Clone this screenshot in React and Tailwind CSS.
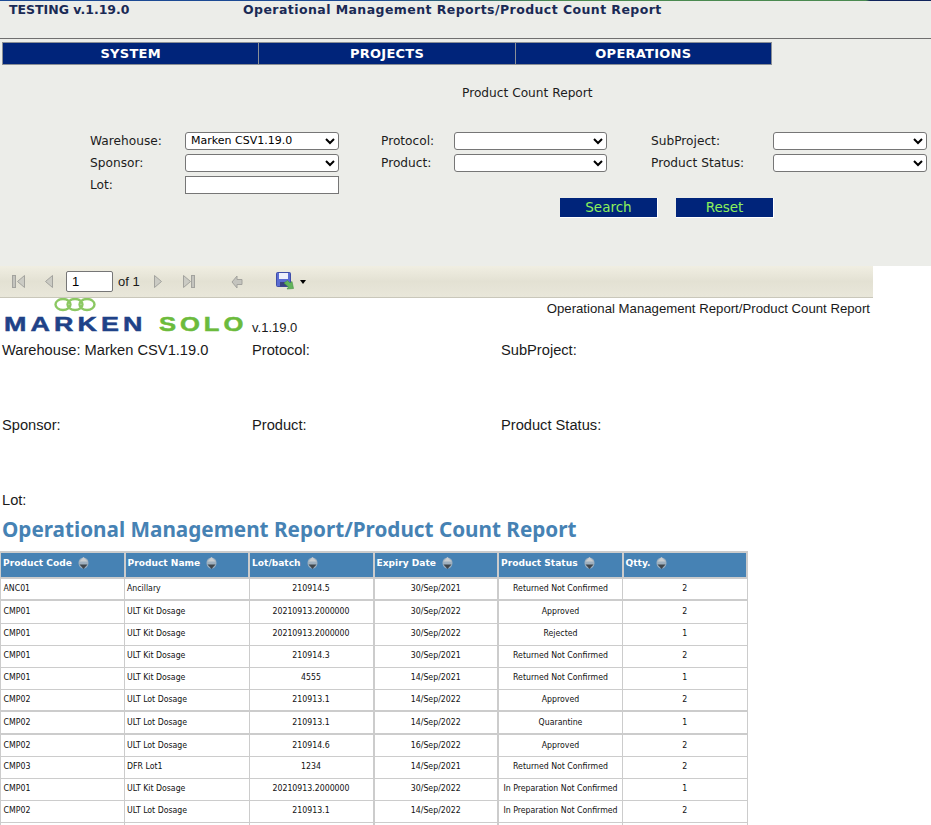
import React from "react";

const verdana = "font-['DejaVu_Sans',sans-serif]";
const arial = "font-['Liberation_Sans',sans-serif]";

const rows = [
  ["ANC01", "Ancillary", "210914.5", "30/Sep/2021", "Returned Not Confirmed", "2"],
  ["CMP01", "ULT Kit Dosage", "20210913.2000000", "30/Sep/2022", "Approved", "2"],
  ["CMP01", "ULT Kit Dosage", "20210913.2000000", "30/Sep/2022", "Rejected", "1"],
  ["CMP01", "ULT Kit Dosage", "210914.3", "30/Sep/2021", "Returned Not Confirmed", "2"],
  ["CMP01", "ULT Kit Dosage", "4555", "14/Sep/2021", "Returned Not Confirmed", "1"],
  ["CMP02", "ULT Lot Dosage", "210913.1", "14/Sep/2022", "Approved", "2"],
  ["CMP02", "ULT Lot Dosage", "210913.1", "14/Sep/2022", "Quarantine", "1"],
  ["CMP02", "ULT Lot Dosage", "210914.6", "16/Sep/2022", "Approved", "2"],
  ["CMP03", "DFR Lot1", "1234", "14/Sep/2021", "Returned Not Confirmed", "2"],
  ["CMP01", "ULT Kit Dosage", "20210913.2000000", "30/Sep/2022", "In Preparation Not Confirmed", "1"],
  ["CMP02", "ULT Lot Dosage", "210913.1", "14/Sep/2022", "In Preparation Not Confirmed", "2"],
  ["", "", "", "", "", ""],
];

const columns = ["Product Code", "Product Name", "Lot/batch", "Expiry Date", "Product Status", "Qtty."];

function SortIcon() {
  return (
    <svg width="11" height="14" viewBox="0 0 11 14" className="ml-[6px] inline-block align-middle">
      <ellipse cx="5.5" cy="7" rx="5" ry="5.5" fill="#9fb0bf" />
      <path d="M5.5 1 L9.5 5.5 H1.5 Z" fill="#c9cdd0" />
      <path d="M5.5 13 L9.5 8.5 H1.5 Z" fill="#3f464d" />
    </svg>
  );
}

function NavIcon({ dir, bar }) {
  const tri = dir === "left" ? "M8.5 1.5 L1.5 7.5 L8.5 13.5 Z" : "M1.5 1.5 L8.5 7.5 L1.5 13.5 Z";
  return (
    <svg width={bar ? 13 : 10} height="15" viewBox={bar ? "0 0 13 15" : "0 0 10 15"}>
      {bar && dir === "left" && <rect x="0.5" y="1.5" width="3" height="12" fill="#c4c4be" stroke="#a3a39e" />}
      <g transform={bar && dir === "left" ? "translate(4 0)" : undefined}>
        <path d={tri} fill="#cbcbc4" stroke="#a3a39e" />
      </g>
      {bar && dir === "right" && <rect x="9.5" y="1.5" width="3" height="12" fill="#c4c4be" stroke="#a3a39e" />}
    </svg>
  );
}

function SaveIcon() {
  return (
    <svg width="19" height="19" viewBox="0 0 19 19">
      <rect x="0.5" y="0.5" width="14" height="14" rx="1" fill="#5a6cd2" stroke="#3f4ea8" />
      <rect x="3" y="1" width="9" height="6" fill="#eef0fb" />
      <rect x="4" y="10" width="7" height="4.5" fill="#39437f" />
      <path d="M8 11 L11.5 8.5 L14 11 L16 9.5 L17.5 16.5 L11 17 L12.5 15 Z" fill="#62b45c" stroke="#469142" strokeWidth="0.6" />
    </svg>
  );
}

function Logo() {
  return (
    <div className="relative h-[39px] w-[250px] shrink-0 overflow-hidden">
      <svg width="42" height="14" viewBox="0 0 42 14" className="absolute left-[54px] top-0">
        <g fill="none" stroke="#8cc863" strokeWidth="2.4">
          <ellipse cx="9" cy="6.5" rx="7.5" ry="5.5" />
          <ellipse cx="21" cy="6.5" rx="7.5" ry="5.5" />
          <ellipse cx="33" cy="6.5" rx="7.5" ry="5.5" />
        </g>
      </svg>
      <div className={`${arial} absolute left-[4px] top-[14px] flex items-baseline text-[21px] font-bold leading-[24px] tracking-[3.2px]`}>
        <span className="w-[155px] origin-left scale-x-[1.28] text-[#1f4288] [-webkit-text-stroke:0.5px_#1f4288]">MARKEN</span>
        <span className="origin-left scale-x-[1.22] text-[#6cbb3c] [-webkit-text-stroke:0.5px_#6cbb3c]">SOLO</span>
      </div>
    </div>
  );
}

function Field({ label, className }) {
  return (
    <div className={`${arial} text-[14.67px] leading-[16px] text-[#1a1a1a] ${className}`}>{label}</div>
  );
}

function Select({ value, className }) {
  return (
    <select className={`${verdana} h-[17.5px] rounded-[3px] border border-[#767676] bg-white pl-[1px] text-[11px] text-black ${className}`}>
      <option>{value}</option>
    </select>
  );
}

function FormLabel({ children }) {
  return <label className={`${verdana} flex h-[17.5px] items-center text-[12.2px] text-[#1c1c1c]`}>{children}</label>;
}

export default function App() {
  return (
    <div className="h-[825px] w-[931px] overflow-hidden bg-white">
      {/* top form area */}
      <div className="h-[266px] bg-[#ecede9]">
        <div className="h-[1px] bg-[linear-gradient(to_right,#1c4a94_0%,#1c4a94_40%,#4a8a50_60%,#4a8a50_93%,#10245c_93.5%)]"></div>
        <div className={`${verdana} flex h-[38px] items-start border-b border-[#6f6f6f] pt-[1px] text-[12.5px] font-bold leading-[16px] text-[#1a2a55]`}>
          <div className="ml-[9px] w-[234px]">TESTING v.1.19.0</div>
          <div className="tracking-[0.43px]">Operational Management Reports/Product Count Report</div>
        </div>

        <div className="ml-[2px] mt-[3px] flex h-[23px] w-[770px] border border-[#8a8f96] bg-[#00247a]">
          {["SYSTEM", "PROJECTS", "OPERATIONS"].map((item, i) => (
            <div
              key={item}
              className={`${verdana} flex flex-1 items-center justify-center text-[13px] font-bold tracking-[0.25px] text-white ${i < 2 ? "border-r border-[#8a8f96]" : ""}`}
            >
              {item}
            </div>
          ))}
        </div>

        <div className={`${verdana} mt-[20px] pl-[462px] text-[12.2px] leading-[16px] text-[#1c1c1c]`}>Product Count Report</div>

        <div className="ml-[90px] mt-[31px] grid grid-cols-[95px_154px_42px_73px_153px_44px_122px_154px] gap-y-[4.5px]">
          <FormLabel>Warehouse:</FormLabel>
          <Select value="Marken CSV1.19.0" />
          <div></div>
          <FormLabel>Protocol:</FormLabel>
          <Select value="" />
          <div></div>
          <FormLabel>SubProject:</FormLabel>
          <Select value="" />

          <FormLabel>Sponsor:</FormLabel>
          <Select value="" />
          <div></div>
          <FormLabel>Product:</FormLabel>
          <Select value="" />
          <div></div>
          <FormLabel>Product Status:</FormLabel>
          <Select value="" />

          <FormLabel>Lot:</FormLabel>
          <input className="h-[17.5px] border border-[#767676] bg-white" />
        </div>

        <div className="ml-[560px] mt-[4px] flex gap-[18px]">
          <button className={`${verdana} h-[20px] w-[98px] border-r border-b border-white bg-[#00247a] text-[13.5px] leading-[18px] text-[#8cf05a]`}>Search</button>
          <button className={`${verdana} h-[20px] w-[98px] border-r border-b border-white bg-[#00247a] text-[13.5px] leading-[18px] text-[#8cf05a]`}>Reset</button>
        </div>
      </div>

      {/* report viewer toolbar */}
      <div className="flex h-[32px] w-[873px] items-center border-b border-[#c9c7ba] bg-[linear-gradient(to_bottom,#f0eee2,#e3e1d3_50%,#e9e7da)]">
        <div className="ml-[12px]"><NavIcon dir="left" bar /></div>
        <div className="ml-[19px]"><NavIcon dir="left" /></div>
        <input defaultValue="1" className={`${arial} ml-[12px] h-[21px] w-[47px] rounded-[2px] border border-[#767676] bg-white pl-[5px] text-[13px]`} />
        <span className={`${arial} ml-[5px] text-[13px] text-[#1a1a1a]`}>of 1</span>
        <div className="ml-[13px]"><NavIcon dir="right" /></div>
        <div className="ml-[19px]"><NavIcon dir="right" bar /></div>
        <svg width="12" height="14" viewBox="0 0 12 14" className="ml-[36px]">
          <path d="M11 4.5 H6 V1 L1 7 L6 13 V9.5 H11 Z" fill="#c4c4be" stroke="#a3a39e" />
        </svg>
        <div className="ml-[33px]"><SaveIcon /></div>
        <div className="ml-[5px] h-0 w-0 border-x-[3px] border-t-[4px] border-x-transparent border-t-black"></div>
      </div>

      {/* report body */}
      <div className="flex h-[39px] w-[873px]">
        <Logo />
        <div className={`${arial} relative flex-1`}>
          <div className="absolute left-[2px] top-[22px] text-[13px] leading-[16px] text-[#1a1a1a]">v.1.19.0</div>
          <div className="absolute right-[3px] top-[3px] whitespace-nowrap text-[13.2px] leading-[16px] text-[#1a1a1a]">Operational Management Report/Product Count Report</div>
        </div>
      </div>

      <div className="grid w-[750px] grid-cols-[250px_249px_1fr] pl-[2px]">
        {[
          "Warehouse: Marken CSV1.19.0", "Protocol:", "SubProject:",
          "Sponsor:", "Product:", "Product Status:",
          "Lot:",
        ].map((label) => (
          <Field key={label} label={label} className="mt-[5px] h-[70px]" />
        ))}
      </div>

      <h1 className="-mt-[47px] ml-[2px] font-['Noto_Sans',sans-serif] text-[20.7px] font-bold leading-[28px] text-[#4682b4]">
        Operational Management Report/Product Count Report
      </h1>

      <table className="-ml-[1px] mt-[8px] w-[749px] table-fixed border-collapse">
        <thead>
          <tr className="h-[26px] bg-[#4682b4]">
            {columns.map((col) => (
              <th key={col} className={`${verdana} border-2 border-[#cccccc] px-[2px] pb-[3px] text-left text-[9.1px] font-bold text-white`}>
                {col}
                <SortIcon />
              </th>
            ))}
          </tr>
        </thead>
        <tbody>
          {rows.map((row, r) => (
            <tr key={r} className={r === 1 || r === 6 ? "h-[23px]" : "h-[22px]"}>
              {row.map((cell, c) => (
                <td
                  key={c}
                  className={`${verdana} border border-[#cccccc] px-[2px] text-[8.7px] text-[#111111] [font-stretch:condensed] ${c > 1 ? "text-center" : "text-left"} ${c === 0 ? "pl-[3px]" : ""} ${c === 2 || c === 3 ? "border-r-2" : ""} ${r === 0 || r === 5 || r === 6 ? "border-b-2" : ""}`}
                >
                  {cell}
                </td>
              ))}
            </tr>
          ))}
        </tbody>
      </table>
    </div>
  );
}
